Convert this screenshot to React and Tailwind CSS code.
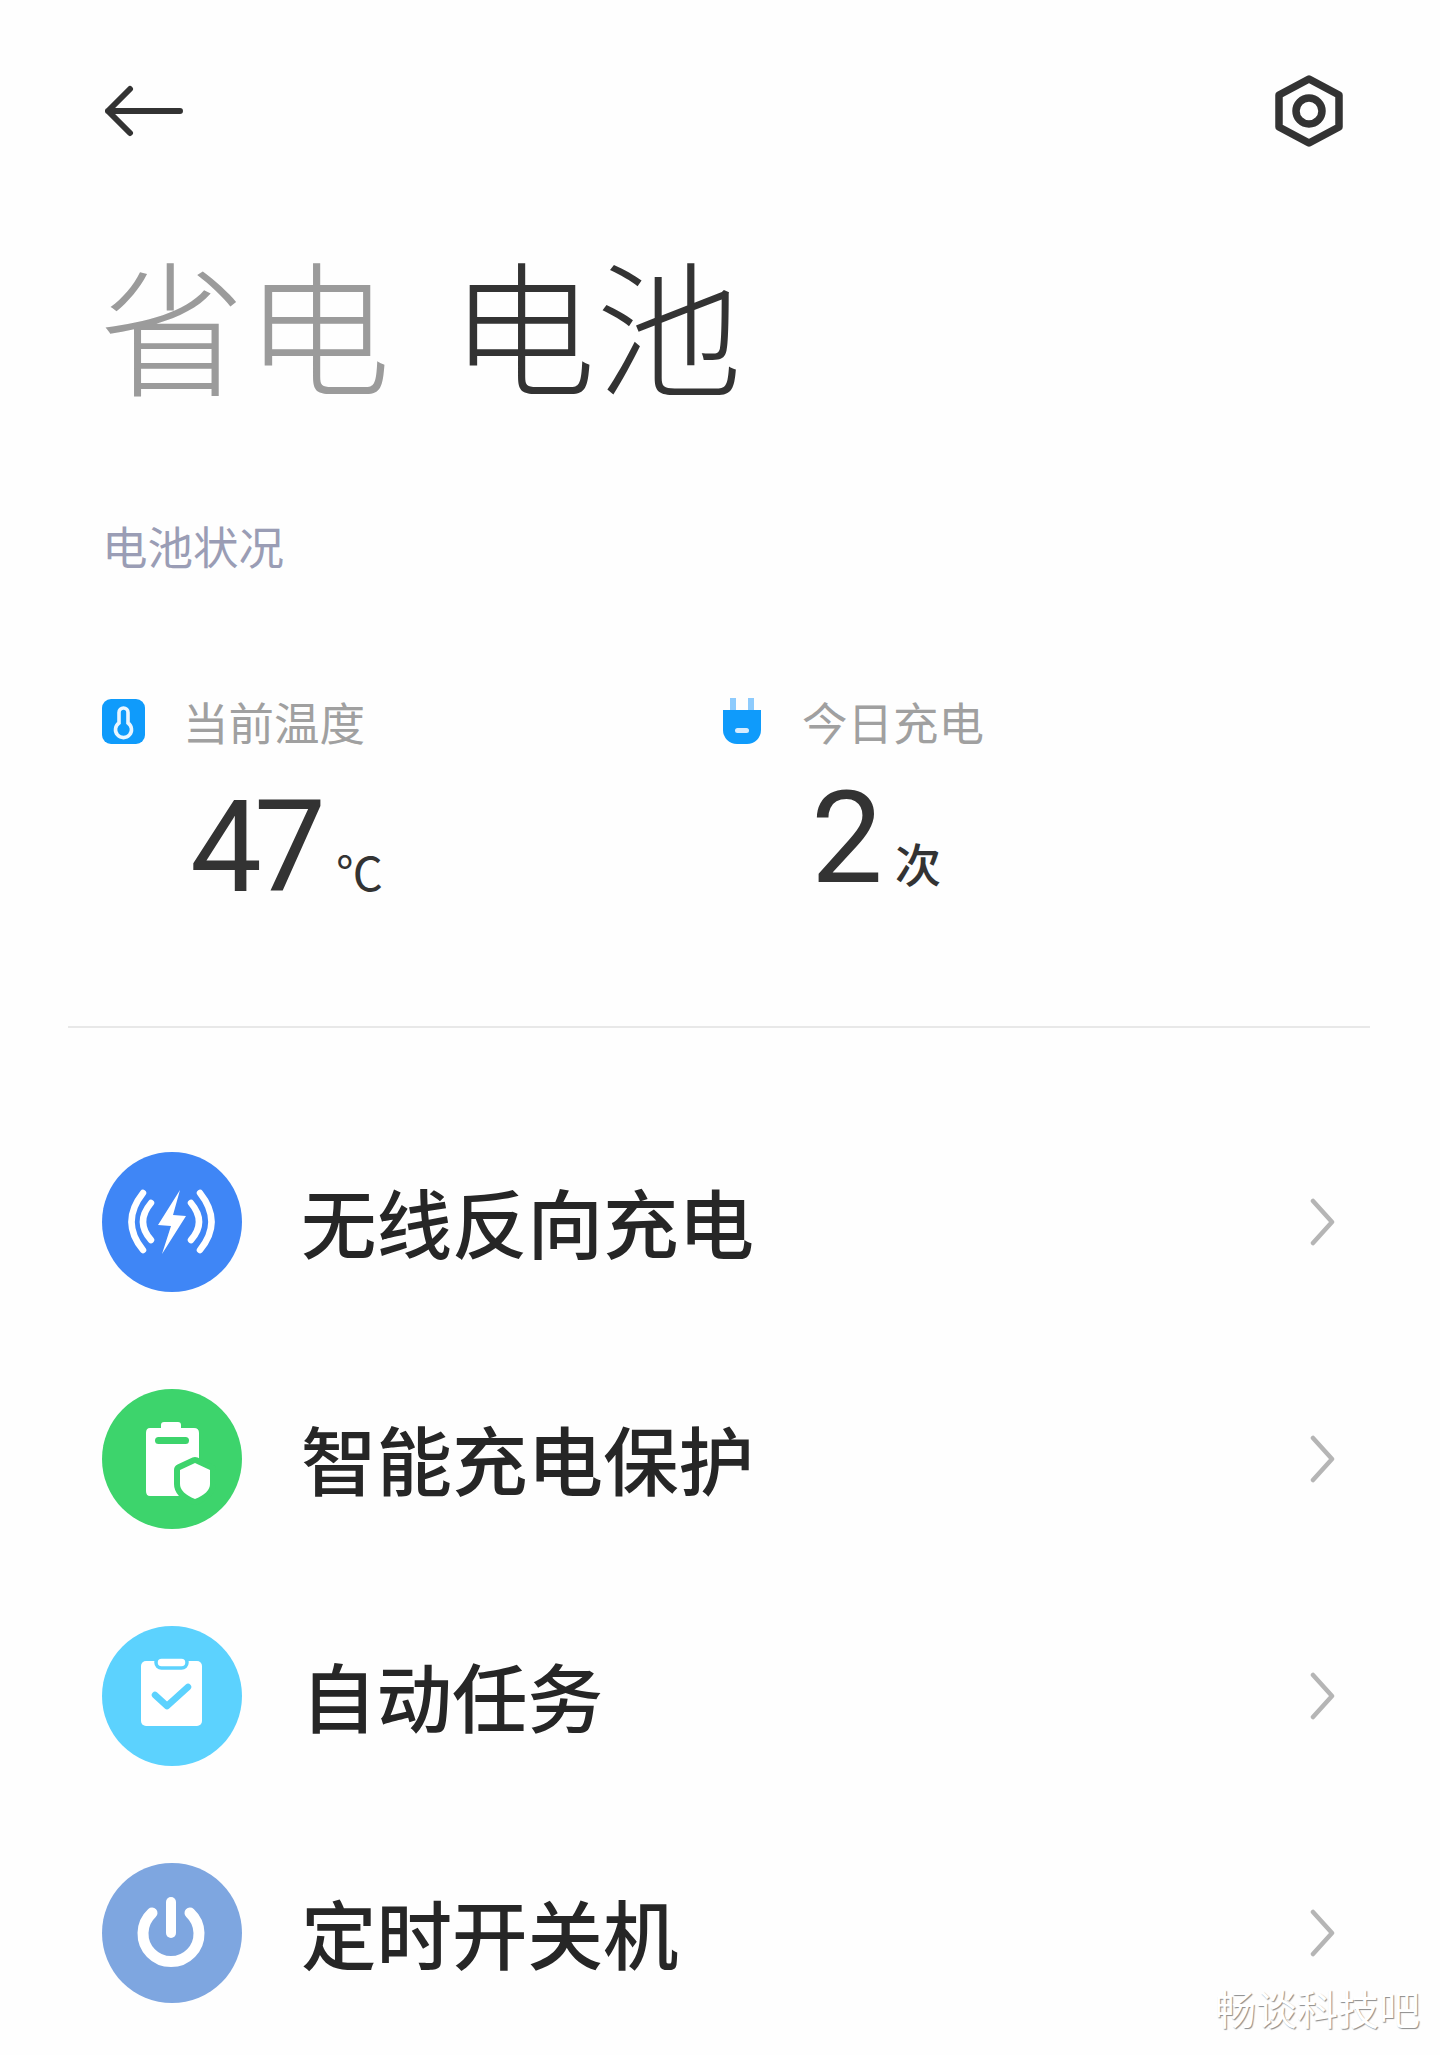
const cjk = "font-['Noto_Sans_CJK_SC','Noto_Sans',sans-serif]";

function BackArrow() {
  return (
    <svg width="78" height="52" viewBox="0 0 78 52" fill="none" stroke="#333" strokeWidth="6" strokeLinecap="round" strokeLinejoin="round">
      <path d="M3 26H75M25 4L3 26L25 48" />
    </svg>
  );
}

function GearNut() {
  return (
    <svg width="68" height="72" viewBox="0 0 68 72" fill="none" stroke="#333" strokeWidth="7.5" strokeLinejoin="round">
      <path d="M34 4L64 20V52L34 68L4 52V20Z" />
      <circle cx="34" cy="36" r="13" />
    </svg>
  );
}

function ThermoIcon() {
  return (
    <svg width="43" height="45" viewBox="0 0 43 45">
      <rect x="0" y="0" width="43" height="45" rx="9" fill="#0f9bfb" />
      <path d="M21.5 9a4.500 4.500 0 0 0-4.500 4.500V24a8 8 0 1 0 9 0V13.500a4.500 4.500 0 0 0-4.500-4.500Z" fill="#0f9bfb" stroke="#eaf6ff" strokeWidth="3.600" />
      <rect x="20.500" y="15" width="2" height="12" fill="#0f9bfb" />
    </svg>
  );
}

function PlugIcon() {
  return (
    <svg width="38" height="46" viewBox="0 0 38 46">
      <rect x="7" y="0" width="6" height="12" fill="#8dcbfd" />
      <rect x="25" y="0" width="6" height="12" fill="#8dcbfd" />
      <path d="M0 12H38V32A14 14 0 0 1 24 46H14A14 14 0 0 1 0 32Z" fill="#0f9bfb" />
      <rect x="12" y="30" width="14" height="5" rx="2.500" fill="#d6ecfe" />
    </svg>
  );
}

function WirelessIcon() {
  return (
    <svg width="140" height="140" viewBox="0 0 140 140">
      <circle cx="70" cy="70" r="70" fill="#3f86f6" />
      <g fill="none" stroke="#fff" strokeWidth="6.500" strokeLinecap="round">
        <path d="M41 41Q18 70 41 98" />
        <path d="M49 51Q33 70 49 88" />
        <path d="M98 41Q121 70 98 98" />
        <path d="M89 51Q105 70 89 88" />
      </g>
      <path d="M78 38L56 73L69 74L60 102L84 64L71 63Z" fill="#fff" />
    </svg>
  );
}

function BatteryShieldIcon() {
  return (
    <svg width="140" height="140" viewBox="0 0 140 140">
      <circle cx="70" cy="70" r="70" fill="#3dd46c" />
      <path d="M59 39V36Q59 33 62 33H76Q79 33 79 36V39H92Q97 39 97 44V102Q97 107 92 107H48Q44 107 44 102V44Q44 39 48 39Z" fill="#fff" />
      <rect x="53" y="48" width="34" height="7" rx="3.500" fill="#3dd46c" />
      <path d="M93 74L108 81V95Q108 104 93 110Q78 104 78 95V81Z" fill="#fff" stroke="#3dd46c" strokeWidth="12" strokeLinejoin="round" paintOrder="stroke" />
    </svg>
  );
}

function TaskIcon() {
  return (
    <svg width="140" height="140" viewBox="0 0 140 140">
      <circle cx="70" cy="70" r="70" fill="#5cd2fe" />
      <rect x="39" y="35" width="61" height="65" rx="5" fill="#fff" />
      <rect x="54" y="31" width="31" height="11" rx="5.500" fill="#fff" stroke="#5cd2fe" strokeWidth="3.500" />
      <path d="M53 69L65 80L86 61" fill="none" stroke="#5cd2fe" strokeWidth="6.500" strokeLinecap="round" strokeLinejoin="round" />
    </svg>
  );
}

function PowerIcon() {
  return (
    <svg width="140" height="140" viewBox="0 0 140 140">
      <circle cx="70" cy="70" r="70" fill="#7ea6e0" />
      <g fill="none" stroke="#fff" strokeLinecap="round">
        <path d="M69 39V70" strokeWidth="10" />
        <path d="M50 50A28 28 0 1 0 88 50" strokeWidth="11" />
      </g>
    </svg>
  );
}

function Chevron() {
  return (
    <svg width="30" height="48" viewBox="0 0 30 48" fill="none" stroke="#b5b5b5" strokeWidth="4.500" strokeLinecap="round" strokeLinejoin="round">
      <path d="M7 3L26 24L7 45" />
    </svg>
  );
}

const rows = [
  { title: "无线反向充电", Icon: WirelessIcon },
  { title: "智能充电保护", Icon: BatteryShieldIcon },
  { title: "自动任务", Icon: TaskIcon },
  { title: "定时开关机", Icon: PowerIcon },
];

export default function App() {
  return (
    <div className={`relative h-[2055px] w-[1440px] overflow-hidden bg-[#fefefe] ${cjk}`}>
      <div className="flex items-center justify-between pt-[75px] pl-[105px] pr-[97px]">
        <BackArrow />
        <GearNut />
      </div>

      <h1 className="mt-[90px] flex gap-[59px] pl-[99px] text-[146px] leading-[170px] font-light">
        <span className="text-[#9b9b9b]">省电</span>
        <span className="text-[#333333]">电池</span>
      </h1>

      <div className="mt-[106px] pl-[102px] text-[45.5px] leading-[64px] text-[#9a9db5]">电池状况</div>

      <div className="mt-[114px] flex h-[220px] pl-[102px]">
        <div className="w-[621px]">
          <div className="flex h-[60px] items-center gap-[38px]">
            <ThermoIcon />
            <span className="text-[45.5px] leading-[60px] text-[#a0a0a0]">当前温度</span>
          </div>
          <div className="mt-[36px] flex items-baseline pl-[88px]">
            <span className="font-['Roboto',sans-serif] text-[128px] leading-[120px] tracking-[-8px] text-[#333333]">47</span>
            <span className="ml-[18px] text-[47px] text-[#333333]">℃</span>
          </div>
        </div>
        <div>
          <div className="flex h-[60px] items-center gap-[41px]">
            <PlugIcon />
            <span className="text-[45.5px] leading-[60px] text-[#a0a0a0]">今日充电</span>
          </div>
          <div className="mt-[27px] flex items-baseline pl-[88px]">
            <span className="font-['Roboto',sans-serif] text-[128px] leading-[120px] text-[#333333]">2</span>
            <span className="ml-[12px] text-[46px] font-medium text-[#333333]">次</span>
          </div>
        </div>
      </div>

      <div className="mx-[68px] mt-[115px] h-[2px] w-[1302px] bg-[#e8e8e8]" />

      <div className="mt-[124px] flex flex-col gap-[97px] pl-[102px] pr-[104px]">
        {rows.map(({ title, Icon }) => (
          <div key={title} className="flex h-[140px] items-center">
            <Icon />
            <span className="ml-[59px] flex-1 pb-[5px] text-[75.5px] leading-[90px] font-medium text-[#262626]">{title}</span>
            <Chevron />
          </div>
        ))}
      </div>

      <div className="absolute top-[1982px] left-[1215px] text-[41px] leading-[50px] text-white [text-shadow:1px_1px_1px_#8a8a8a]">
        畅谈科技吧
      </div>
    </div>
  );
}
